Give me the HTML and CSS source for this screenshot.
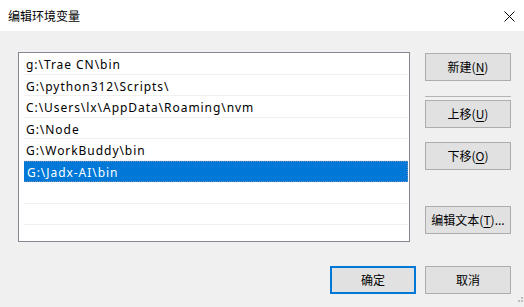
FILE: index.html
```html
<!DOCTYPE html>
<html lang="zh-CN">
<head>
<meta charset="utf-8">
<title>编辑环境变量</title>
<link rel="stylesheet" href="styles.css">
</head>
<body>
<div class="window">
  <div class="titlebar">
    <span class="title">编辑环境变量</span>
    <svg class="close" width="11" height="11" viewBox="0 0 11 11"><path d="M0.5 0.5 L10.5 10.5 M10.5 0.5 L0.5 10.5" stroke="#000" stroke-width="1" fill="none"/></svg>
  </div>
  <div class="content">
    <div class="main">
      <div class="list">
        <div class="row">g:\Trae CN\bin</div>
        <div class="row">G:\python312\Scripts\</div>
        <div class="row">C:\Users\lx\AppData\Roaming\nvm</div>
        <div class="row">G:\Node</div>
        <div class="row">G:\WorkBuddy\bin</div>
        <div class="row selected">G:\Jadx-AI\bin</div>
        <div class="row"></div>
        <div class="row"></div>
        <div class="row"></div>
      </div>
      <div class="side">
        <button class="btn">新建(<u>N</u>)</button>
        <div class="sep"></div>
        <button class="btn btn-up">上移(<u>U</u>)</button>
        <button class="btn btn-down">下移(<u>O</u>)</button>
        <button class="btn btn-edit">编辑文本(<u>T</u>)...</button>
      </div>
    </div>
    <div class="footer">
      <button class="btn primary">确定</button>
      <button class="btn">取消</button>
    </div>
  </div>
  <svg class="grip" width="8" height="8" viewBox="0 0 8 8">
    <rect x="6" y="1" width="2" height="2" fill="#bcbcbc"/>
    <rect x="3" y="4" width="2" height="2" fill="#bcbcbc"/>
    <rect x="6" y="4" width="2" height="2" fill="#bcbcbc"/>
  </svg>
</div>
</body>
</html>
```
FILE: styles.css
```css
* { box-sizing: border-box; }
html, body {
  margin: 0;
  padding: 0;
  background: #f0f0f0;
}
body {
  font-family: "Noto Sans", "Noto Sans CJK SC", sans-serif;
  font-size: 12px;
  color: #000;
}
.window {
  position: relative;
  width: 524px;
  height: 307px;
  background: #f0f0f0;
  overflow: hidden;
}
.titlebar {
  height: 31px;
  background: #fff;
  display: flex;
  align-items: center;
  justify-content: space-between;
  padding: 1px 9px 0 8px;
}
.title {
  font-family: "Noto Sans CJK SC", sans-serif;
  font-size: 12px;
  line-height: 14px;
}
.close {
  display: block;
}
.content {
  padding: 21px 13px 0 18px;
}
.main {
  display: flex;
  gap: 15px;
}
.list {
  width: 392px;
  height: 190px;
  border: 1px solid #828790;
  background: #fff;
  padding: 0 1px 0 5px;
  overflow: hidden;
}
.row {
  height: 21.5px;
  line-height: 18px;
  padding: 3px 0 0 2px;
  border-bottom: 1px solid #f0f0f0;
  white-space: nowrap;
  letter-spacing: 0.95px;
}
.row.selected {
  background: #0078d7;
  color: #fff;
  border: 1px dotted #6d8fb8;
  border-left-color: #0078d7;
  padding: 2px 0 0 2px;
}
.side {
  display: flex;
  flex-direction: column;
  width: 86px;
  padding-top: 1px;
}
.btn {
  width: 86px;
  height: 28px;
  margin: 0;
  padding: 0 0 1px;
  background: #e1e1e1;
  border: 1px solid #adadad;
  font-family: "Noto Sans CJK SC", sans-serif;
  font-size: 12px;
  color: #000;
  line-height: 1;
}
.btn u {
  text-decoration-thickness: 1px;
  text-underline-offset: 2px;
}
.sep {
  height: 1px;
  background: #b4b4b4;
  margin-top: 15px;
}
.btn-up { margin-top: 3px; }
.btn-down { margin-top: 14px; }
.btn-edit { margin-top: 36px; }
.footer {
  display: flex;
  justify-content: flex-end;
  gap: 9px;
  margin-top: 24px;
}
.btn.primary {
  border: 2px solid #0078d7;
}
.grip {
  position: absolute;
  right: 1px;
  bottom: 3px;
}
```
